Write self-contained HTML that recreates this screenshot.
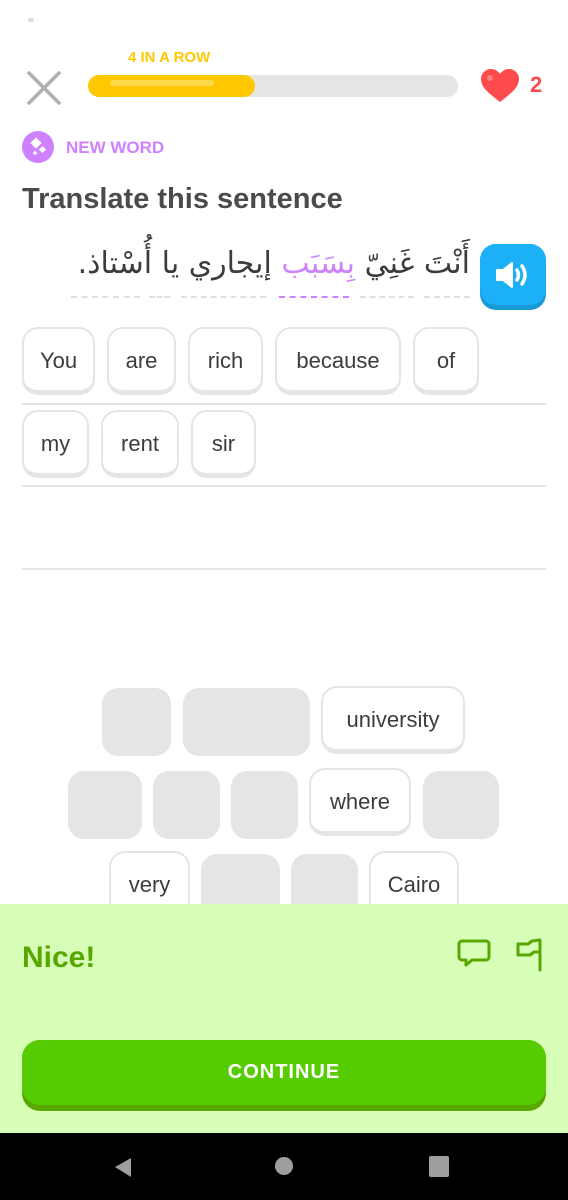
<!DOCTYPE html>
<html><head><meta charset="utf-8"><style>
*{margin:0;padding:0;box-sizing:border-box}
body{width:568px;height:1200px;background:#fff;position:relative;overflow:hidden;font-family:"Liberation Sans","DejaVu Sans",sans-serif;color:#3c3c3c}
.a{position:absolute}
.t{position:absolute;height:68px;border:2px solid #e5e5e5;border-bottom-width:5px;border-radius:16px;background:#fff;font-size:22px;display:flex;align-items:center;justify-content:center;color:#3c3c3c;padding-top:2px}
.g{position:absolute;height:68px;border-radius:16px;background:#e5e5e5}
.ln{position:absolute;left:22px;width:524px;height:2px;background:#e5e5e5}
.d{position:absolute;top:296px;border-top:2px dashed #e0e0e0}
</style></head><body>
<div class="a" style="left:28px;top:18px;width:6px;height:4px;background:#e0e0e0;border-radius:2px"></div>
<div class="a" style="left:128px;top:49px;font-size:15px;font-weight:bold;color:#ffc800">4 IN A ROW</div>
<svg class="a" style="left:26px;top:70px" width="36" height="36"><path d="M3 3L33 33M33 3L3 33" stroke="#afafaf" stroke-width="3.5" stroke-linecap="round"/></svg>
<div class="a" style="left:88px;top:75px;width:370px;height:22px;border-radius:11px;background:#e5e5e5"></div>
<div class="a" style="left:88px;top:75px;width:167px;height:22px;border-radius:11px;background:#ffc800"></div>
<div class="a" style="left:110px;top:80px;width:104px;height:6px;border-radius:3px;background:#ffd94d"></div>
<svg class="a" style="left:480px;top:68px" width="40" height="36" viewBox="0 0 40 36"><path d="M20 34C10 26 1 20 1 11C1 5 6 1 11 1C15 1 18 3 20 6C22 3 25 1 29 1C34 1 39 5 39 11C39 20 30 26 20 34Z" fill="#ff4b4b"/><circle cx="10" cy="10" r="3" fill="#ff8080"/></svg>
<div class="a" style="left:530px;top:72px;font-size:22px;font-weight:bold;color:#ff4b4b">2</div>
<div class="a" style="left:22px;top:131px;width:32px;height:32px;border-radius:50%;background:#ce82ff"></div>
<svg class="a" style="left:22px;top:131px" width="32" height="32"><rect x="10" y="8" width="8" height="8" transform="rotate(45 14 12)" fill="#fff"/><rect x="18" y="16" width="5" height="5" transform="rotate(45 20.5 18.5)" fill="#fff"/><circle cx="13" cy="22" r="1.8" fill="#fff"/></svg>
<div class="a" style="left:66px;top:138px;font-size:17px;font-weight:bold;color:#ce82ff">NEW WORD</div>
<div class="a" style="left:22px;top:183px;font-size:29px;font-weight:bold;color:#4b4b4b">Translate this sentence</div>
<div class="a" dir="rtl" style="left:40px;top:246px;width:430px;text-align:right;font-size:30px;font-family:'DejaVu Sans',sans-serif;color:#3c3c3c;white-space:nowrap">أَنْتَ غَنِيّ <span style="color:#ce82ff">بِسَبَب</span> إيجاري يا أُسْتاذ.</div>
<div class="d" style="left:71px;width:69px"></div>
<div class="d" style="left:149px;width:21px"></div>
<div class="d" style="left:181px;width:85px"></div>
<div class="d" style="left:279px;width:70px;border-top-color:#ce82ff"></div>
<div class="d" style="left:360px;width:54px"></div>
<div class="d" style="left:424px;width:46px"></div>
<div class="a" style="left:480px;top:244px;width:66px;height:66px;border-radius:16px;background:#1899d6"></div>
<div class="a" style="left:480px;top:244px;width:66px;height:61px;border-radius:16px;background:#1cb0f6"></div>
<svg class="a" style="left:494px;top:258px" width="40" height="34" viewBox="0 0 40 34"><path d="M3 12h6l9-7v24l-9-7H3z" fill="#fff" stroke="#fff" stroke-width="2" stroke-linejoin="round"/><path d="M23 12q3 5 0 10M28 8q6 9 0 18" stroke="#fff" stroke-width="3.5" fill="none" stroke-linecap="round"/></svg>

<div class="t" style="left:22px;top:327px;width:73px">You</div>
<div class="t" style="left:107px;top:327px;width:69px">are</div>
<div class="t" style="left:188px;top:327px;width:75px">rich</div>
<div class="t" style="left:275px;top:327px;width:126px">because</div>
<div class="t" style="left:413px;top:327px;width:66px">of</div>
<div class="ln" style="top:403px"></div>
<div class="t" style="left:22px;top:410px;width:67px">my</div>
<div class="t" style="left:101px;top:410px;width:78px">rent</div>
<div class="t" style="left:191px;top:410px;width:65px">sir</div>
<div class="ln" style="top:485px"></div>
<div class="ln" style="top:568px"></div>

<div class="g" style="left:102px;top:688px;width:69px"></div>
<div class="g" style="left:183px;top:688px;width:127px"></div>
<div class="t" style="left:321px;top:686px;width:144px">university</div>
<div class="g" style="left:68px;top:771px;width:74px"></div>
<div class="g" style="left:153px;top:771px;width:67px"></div>
<div class="g" style="left:231px;top:771px;width:67px"></div>
<div class="t" style="left:309px;top:768px;width:102px">where</div>
<div class="g" style="left:423px;top:771px;width:76px"></div>
<div class="t" style="left:109px;top:851px;width:81px">very</div>
<div class="g" style="left:201px;top:854px;width:79px"></div>
<div class="g" style="left:291px;top:854px;width:67px"></div>
<div class="t" style="left:369px;top:851px;width:90px">Cairo</div>

<div class="a" style="left:0;top:904px;width:568px;height:229px;background:#d7ffb8"></div>
<div class="a" style="left:22px;top:941px;font-size:30px;font-weight:bold;color:#58a700">Nice!</div>
<svg class="a" style="left:456px;top:938px" width="36" height="32" viewBox="0 0 36 32"><path d="M6 3h24a3 3 0 0 1 3 3v13a3 3 0 0 1-3 3H16l-6 5v-5H6a3 3 0 0 1-3-3V6a3 3 0 0 1 3-3z" fill="none" stroke="#58a700" stroke-width="3" stroke-linejoin="round"/></svg>
<svg class="a" style="left:512px;top:936px" width="34" height="36" viewBox="0 0 34 36"><path d="M28 34V4l-8 1-4 3H6v11h12l4-3h6" fill="none" stroke="#58a700" stroke-width="3" stroke-linejoin="round" stroke-linecap="round"/></svg>
<div class="a" style="left:22px;top:1040px;width:524px;height:71px;border-radius:18px;background:#58a700"></div>
<div class="a" style="left:22px;top:1040px;width:524px;height:65px;border-radius:18px;background:#58cc02;color:#fff;font-size:20px;font-weight:bold;letter-spacing:1px;display:flex;align-items:center;justify-content:center">CONTINUE</div>

<div class="a" style="left:0;top:1133px;width:568px;height:67px;background:#000"></div>
<svg class="a" style="left:106px;top:1152px" width="30" height="30"><path d="M9 15L25 6v19z" fill="#9e9e9e"/></svg>
<div class="a" style="left:275px;top:1157px;width:18px;height:18px;border-radius:50%;background:#9e9e9e"></div>
<div class="a" style="left:429px;top:1156px;width:20px;height:21px;border-radius:2px;background:#9e9e9e"></div>
</body></html>
